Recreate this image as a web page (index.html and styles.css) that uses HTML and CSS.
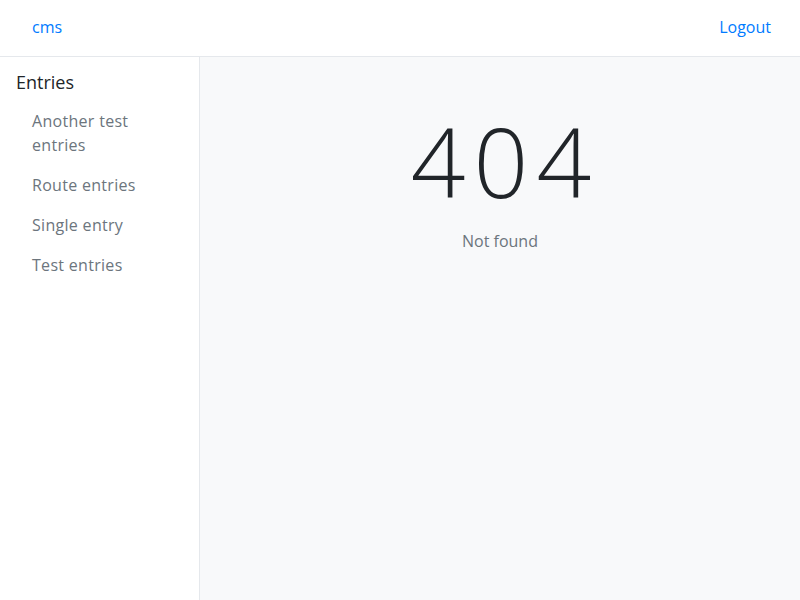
FILE: index.html
```
<!DOCTYPE html>
<html>
<head>
<meta charset="utf-8">
<link rel="stylesheet" href="styles.css">
</head>
<body>
<header class="topbar">
  <a class="brand" href="#">cms</a>
  <a class="logout" href="#">Logout</a>
</header>
<div class="layout">
  <aside class="sidebar">
    <h2 class="side-title">Entries</h2>
    <ul class="side-list">
      <li><a href="#">Another test entries</a></li>
      <li><a href="#">Route entries</a></li>
      <li><a href="#">Single entry</a></li>
      <li><a href="#">Test entries</a></li>
    </ul>
  </aside>
  <main class="main">
    <h1 class="code">404</h1>
    <p class="msg">Not found</p>
  </main>
</div>
</body>
</html>
```
FILE: styles.css
```
* { box-sizing: border-box; }
html, body { margin: 0; height: 100%; }
body {
  font-family: "Open Sans", "Noto Sans", sans-serif;
  font-size: 16px;
  color: #212529;
  background: #fff;
  display: flex;
  flex-direction: column;
}
a { text-decoration: none; }
.topbar {
  height: 57px;
  flex: none;
  display: flex;
  align-items: center;
  justify-content: space-between;
  padding: 0 29px 3px 32px;
  border-bottom: 1px solid #e5e8ec;
}
.brand, .logout { color: #007bff; font-size: 16px; }
.layout { flex: 1; display: flex; }
.sidebar {
  width: 200px;
  flex: none;
  border-right: 1px solid #e5e8ec;
  padding: 11px 0 0 16px;
}
.side-title {
  margin: 0 0 5px;
  font-weight: 400;
  font-size: 18px;
  line-height: 28px;
  color: #212529;
}
.side-list { list-style: none; margin: 0; padding: 0; }
.side-list li { padding: 8px 40px 8px 16px; line-height: 24px; letter-spacing: 0.3px; }
.side-list a { color: #6c757d; }
.main {
  flex: 1;
  background: #f8f9fa;
  text-align: center;
  padding-top: 46px;
}
.code {
  margin: 0;
  font-weight: 300;
  font-size: 96px;
  line-height: 1.2;
  color: #212529;
  letter-spacing: 8px;
  padding-left: 10px;
}
.msg { margin: 11px 0 0; color: #6c757d; line-height: 24px; }
```
